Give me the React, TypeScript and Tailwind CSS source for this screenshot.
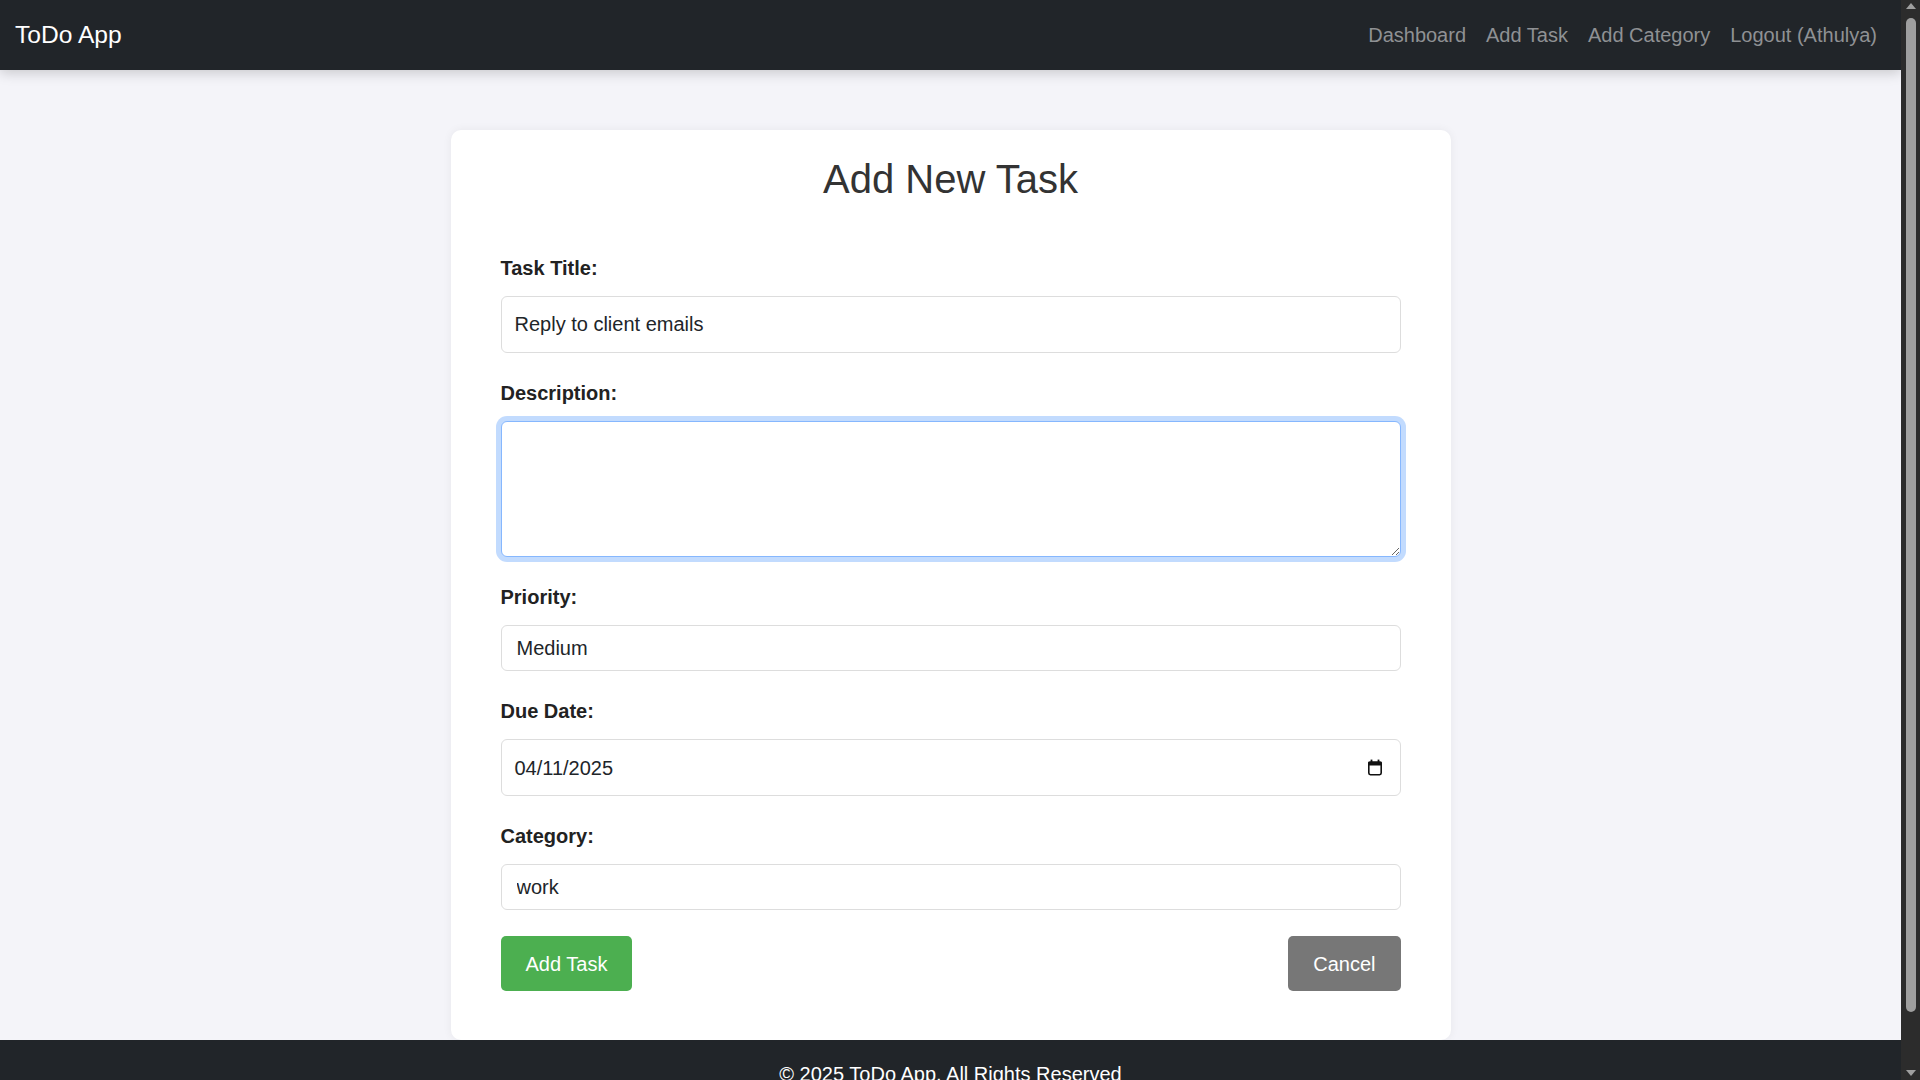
import { useState } from "react";

const labelCls = "block mb-[17px] text-[20px] leading-[22px] font-bold text-[#222]";
const fieldCls =
  "block w-full border border-[#ddd] rounded-[6px] bg-white text-[20px] text-[#212529] outline-none";

function CalendarIcon() {
  return (
    <svg width="16" height="17" viewBox="0 0 16 17" aria-hidden="true">
      <rect x="1.8" y="3.3" width="12.4" height="12.4" rx="1.6" fill="none" stroke="#111" strokeWidth="1.6" />
      <rect x="1" y="2.5" width="14" height="4" rx="1.4" fill="#111" />
      <rect x="3.6" y="0.6" width="1.8" height="3" fill="#111" />
      <rect x="10.6" y="0.6" width="1.8" height="3" fill="#111" />
    </svg>
  );
}

function FakeScrollbar() {
  return (
    <div className="w-[19px] shrink-0 bg-[#2c2c2c] flex flex-col items-center">
      <svg width="10" height="6" viewBox="0 0 10 6" className="mt-[3px]">
        <path d="M5 0 L10 6 L0 6 Z" fill="#9f9f9f" />
      </svg>
      <div className="mt-[9px] h-[994px] w-[10px] rounded-full bg-[#9f9f9f]" />
      <div className="flex-1" />
      <svg width="10" height="6" viewBox="0 0 10 6" className="mb-[4px]">
        <path d="M0 0 L10 0 L5 6 Z" fill="#9f9f9f" />
      </svg>
    </div>
  );
}

export default function App() {
  const [title, setTitle] = useState("Reply to client emails");
  const [description, setDescription] = useState("");
  const [priority, setPriority] = useState("Medium");
  const [category, setCategory] = useState("work");

  return (
    <div className="flex h-screen w-full overflow-hidden font-['Liberation_Sans',Arial,sans-serif]">
      <div className="flex-1 min-w-0 overflow-hidden bg-[#f4f4f9]">
        <nav className="relative z-10 flex h-[70px] items-center justify-between bg-[#212529] pl-[15px] pr-6 shadow-[0_3px_12px_rgba(0,0,0,0.18)]">
          <a href="#" className="text-[24.6px] leading-none text-white">
            ToDo App
          </a>
          <ul className="flex items-center gap-[20px] text-[20px] text-[#8f9194]">
            <li>Dashboard</li>
            <li>Add Task</li>
            <li>Add Category</li>
            <li>Logout (Athulya)</li>
          </ul>
        </nav>

        <main className="pt-[60px]">
          <div className="mx-auto w-[1000px] rounded-[10px] bg-white px-[50px] pt-[25px] pb-[49px] shadow-[0_0_10px_rgba(0,0,0,0.06)]">
            <h2 className="mb-[54px] text-center text-[40px] leading-[48px] text-[#333]">Add New Task</h2>

            <form onSubmit={(e) => e.preventDefault()}>
              <div className="mb-[29px]">
                <label className={labelCls}>Task Title:</label>
                <input
                  value={title}
                  onChange={(e) => setTitle(e.target.value)}
                  className={fieldCls + " h-[57px] px-[13px]"}
                />
              </div>

              <div className="mb-[29px]">
                <label className={labelCls}>Description:</label>
                <textarea
                  value={description}
                  onChange={(e) => setDescription(e.target.value)}
                  className="block h-[136px] w-full rounded-[6px] border border-[#86b7fe] bg-white px-3 py-2 text-[20px] outline-none ring-[5px] ring-[#0d6efd]/25"
                />
              </div>

              <div className="mb-[29px]">
                <label className={labelCls}>Priority:</label>
                <select
                  value={priority}
                  onChange={(e) => setPriority(e.target.value)}
                  className={fieldCls + " h-[46px] appearance-none pl-[15px]"}
                >
                  <option>Low</option>
                  <option>Medium</option>
                  <option>High</option>
                </select>
              </div>

              <div className="mb-[29px]">
                <label className={labelCls}>Due Date:</label>
                <div className={fieldCls + " flex h-[57px] items-center justify-between pl-[13px] pr-[17px]"}>
                  <span>04/11/2025</span>
                  <CalendarIcon />
                </div>
              </div>

              <div className="mb-[26px]">
                <label className={labelCls}>Category:</label>
                <select
                  value={category}
                  onChange={(e) => setCategory(e.target.value)}
                  className={fieldCls + " h-[46px] appearance-none pl-[15px]"}
                >
                  <option>work</option>
                  <option>personal</option>
                </select>
              </div>

              <div className="flex items-center justify-between">
                <button
                  type="submit"
                  className="h-[55px] rounded-[5px] bg-[#4caf50] px-[25px] text-[20px] text-white"
                >
                  Add Task
                </button>
                <button
                  type="button"
                  className="h-[55px] rounded-[5px] bg-[#777] px-[25px] text-[20px] text-white"
                >
                  Cancel
                </button>
              </div>
            </form>
          </div>
        </main>

        <footer className="bg-[#212529] pt-[23px] pb-[54px] text-center text-[20px] leading-[22px] text-white">
          © 2025 ToDo App. All Rights Reserved
        </footer>
      </div>
      <FakeScrollbar />
    </div>
  );
}
